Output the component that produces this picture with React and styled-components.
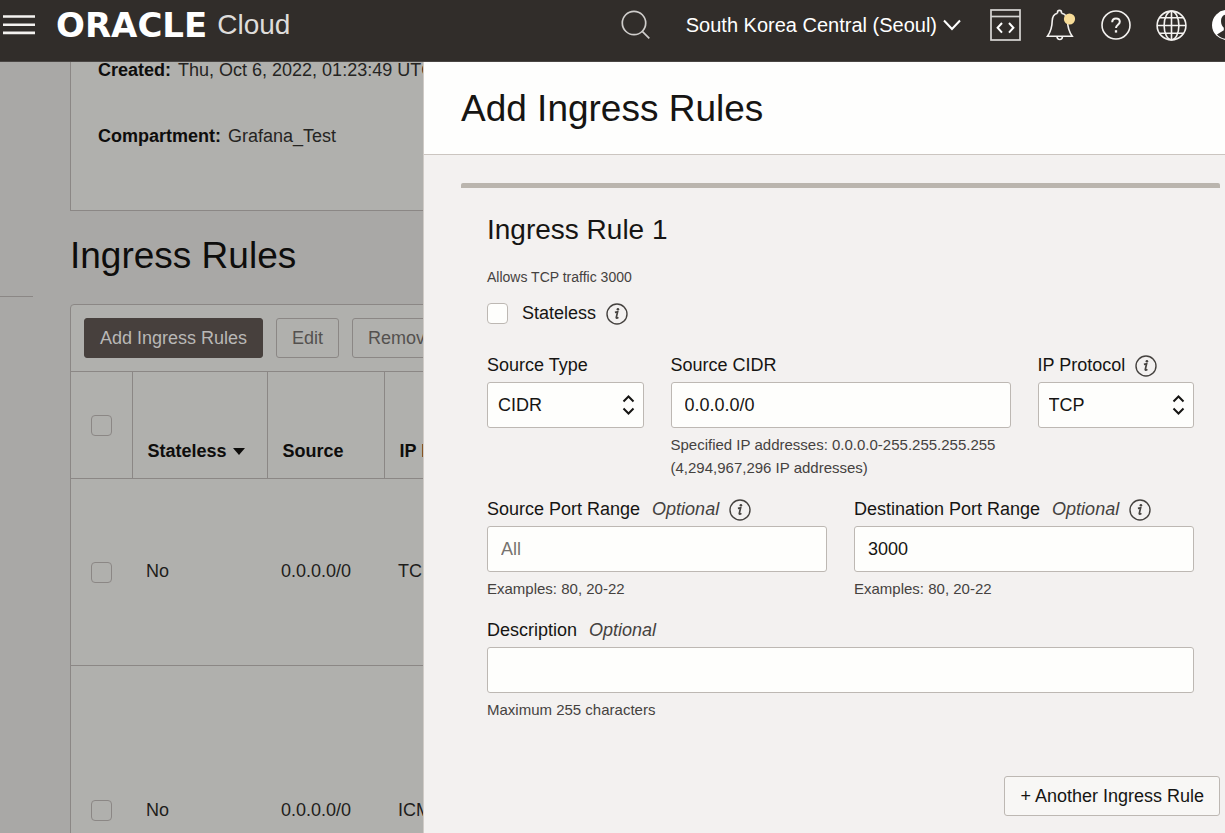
import React from "react";
import styled, { createGlobalStyle } from "styled-components";

const GlobalStyle = createGlobalStyle`
  *, *::before, *::after { box-sizing: border-box; }
  body {
    margin: 0;
    overflow: hidden;
    font-family: "Liberation Sans", Arial, sans-serif;
    font-size: 18px;
    line-height: 24px;
    color: #161513;
  }
  h1, h2, h3, p { margin: 0; font-weight: 400; }
  button, input, select { font: inherit; color: inherit; margin: 0; }
`;

const Shell = styled.div`
  display: flex;
  flex-direction: column;
  height: 100vh;
`;

/* ---------- top bar ---------- */

const TopBar = styled.header`
  display: flex;
  align-items: center;
  flex: none;
  height: 62px;
  padding: 0 0 11px 3px;
  background: #312d2a;
  border-bottom: 1px solid #4a4644;
  color: #fff;
`;

const BarButton = styled.button`
  display: flex;
  align-items: center;
  flex: none;
  padding: 0;
  border: 0;
  background: none;
  color: #f4f2f0;
  cursor: pointer;
  svg { display: block; flex: none; }
`;

const Brand = styled.a`
  display: flex;
  align-items: center;
  gap: 10px;
  margin-left: 21px;
  color: #fff;
  text-decoration: none;
`;

const BrandName = styled.span`
  font-family: "DejaVu Sans", sans-serif;
  font-size: 34px;
  font-weight: 700;
  line-height: 32px;
`;

const BrandProduct = styled.span`
  font-size: 28px;
  line-height: 32px;
  color: #dedcda;
`;

const BarTools = styled.div`
  display: flex;
  align-items: center;
  gap: 25px;
  margin-left: auto;
`;

const RegionButton = styled(BarButton)`
  gap: 6px;
  margin: 0 4px 0 10px;
  font-size: 20px;
  color: #fff;
  white-space: nowrap;
`;

const AvatarButton = styled(BarButton)`
  width: 13px;
  overflow: hidden;
`;

/* ---------- dimmed page ---------- */

const Workspace = styled.div`
  display: flex;
  flex: 1;
  min-height: 0;
`;

const Page = styled.main`
  display: flex;
  flex: 0 0 424px;
  overflow: hidden;
  background: #a9a8a6;
  border-right: 1px solid #cfcbc7;
`;

const Sidebar = styled.aside`
  flex: 0 0 70px;
  padding-top: 234px;
`;

const SidebarRule = styled.hr`
  width: 33px;
  margin: 0;
  border: 0;
  border-top: 1px solid #8b8785;
`;

const PageContent = styled.div`
  flex: none;
  width: 640px;
`;

const Facts = styled.dl`
  display: flex;
  flex-direction: column;
  gap: 42px;
  height: 149px;
  margin: 0;
  padding: 0 27px;
  background: #b0b0ad;
  border: 1px solid #8b8785;
  border-top: 0;
  line-height: 16px;
`;

const Fact = styled.div`
  display: flex;
  gap: 7px;
  height: 24px;
  color: #252422;
  dt { font-weight: 700; color: #0e0d0c; }
  dd { margin: 0; }
`;

const PageTitle = styled.h2`
  margin: 23px 0 26px;
  font-size: 37px;
  line-height: 44px;
  color: #0e0d0c;
`;

const TableCard = styled.section`
  background: #b0b0ad;
  border: 1px solid #8b8785;
  border-radius: 4px 4px 0 0;
`;

const Toolbar = styled.div`
  display: flex;
  gap: 13px;
  padding: 13px;
`;

const ActionButton = styled.button`
  height: 40px;
  padding: 0 15px;
  border: 1px solid ${(p) => (p.$primary ? "#47403d" : "#8b8785")};
  border-radius: 3px;
  background: ${(p) => (p.$primary ? "#47403d" : "transparent")};
  color: ${(p) => (p.$primary ? "#b9b8b6" : "#54514f")};
  white-space: nowrap;
`;

const RulesTable = styled.table`
  width: 100%;
  table-layout: fixed;
  border-collapse: collapse;
  color: #1e1d1b;
`;

const HeadCell = styled.th`
  width: ${(p) => p.$width};
  height: 107px;
  padding: 0 15px 15px;
  border: 1px solid #8b8785;
  border-left-width: ${(p) => (p.$first ? 0 : "1px")};
  text-align: left;
  vertical-align: bottom;
  white-space: nowrap;
  color: #0e0d0c;
  svg { margin-left: 6px; vertical-align: 2px; }
`;

const CheckHeadCell = styled(HeadCell)`
  padding: 0 20px;
  vertical-align: middle;
`;

const Row = styled.tr`
  height: ${(p) => (p.$tall ? "290px" : "187px")};
  border-bottom: 1px solid #8b8785;
`;

const Cell = styled.td`
  padding: 0 14px 2px;
`;

const CheckCell = styled(Cell)`
  padding: 0 20px;
`;

const CheckBox = styled.input`
  appearance: none;
  display: block;
  flex: none;
  width: 21px;
  height: 21px;
  border: 1px solid ${(p) => (p.$dim ? "#8b8785" : "#bdb8b3")};
  border-radius: 4px;
  background: ${(p) => (p.$dim ? "transparent" : "#fefefc")};
`;

/* ---------- drawer ---------- */

const Drawer = styled.section`
  display: flex;
  flex-direction: column;
  flex: 1;
  min-width: 0;
  background: #f3f1f0;
`;

const DrawerHead = styled.header`
  padding: 25px 37px 23px;
  background: #fefefd;
  border-bottom: 1px solid #cbc5c0;
`;

const DrawerTitle = styled.h1`
  font-size: 37px;
  line-height: 44px;
`;

const DrawerBody = styled.form`
  display: flex;
  flex-direction: column;
  padding: 28px 5px 18px 37px;
`;

const RuleCard = styled.fieldset`
  min-width: 0;
  margin: 0;
  padding: 24px 26px 55px;
  border: 0;
  border-top: 5px solid #bab5ae;
  border-radius: 2px 2px 0 0;
`;

const RuleTitle = styled.h3`
  font-size: 28px;
  line-height: 36px;
`;

const Summary = styled.p`
  margin-top: 18px;
  font-size: 14px;
  line-height: 23px;
  color: #45423f;
`;

const StatelessRow = styled.div`
  display: flex;
  align-items: center;
  margin: 12px 0 28px;
  label { margin-left: 14px; }
`;

const FieldGrid = styled.div`
  display: grid;
  grid-template-columns: repeat(4, 1fr);
  gap: 18px 27px;
`;

const FieldBox = styled.div`
  grid-column: span ${(p) => p.$span};
  min-width: 0;
`;

const LabelRow = styled.div`
  display: flex;
  align-items: center;
  height: 24px;
  margin-bottom: 5px;
  white-space: nowrap;
`;

const Optional = styled.em`
  margin-left: 12px;
  color: #45423f;
`;

const InfoButton = styled.button`
  display: block;
  flex: none;
  margin: 2px 0 0 10px;
  padding: 0;
  border: 0;
  background: none;
  color: #45423f;
  svg { display: block; }
`;

const Input = styled.input`
  display: block;
  width: 100%;
  height: 46px;
  padding: 0 13px;
  border: 1px solid #bdb8b3;
  border-radius: 3px;
  background: #fefefc;
  &::placeholder { color: #77736f; opacity: 1; }
`;

const SelectWrap = styled.div`
  display: grid;
  align-items: center;
  > * { grid-area: 1 / 1; }
  svg { justify-self: end; margin-right: 9px; pointer-events: none; }
`;

const Select = styled.select`
  appearance: none;
  width: 100%;
  height: 46px;
  padding: 0 30px 0 10px;
  border: 1px solid #bdb8b3;
  border-radius: 3px;
  background: #fefefc;
`;

const Help = styled.p`
  margin-top: 5px;
  font-size: 15px;
  line-height: 23px;
  color: #45423f;
`;

const AddButton = styled.button`
  align-self: flex-end;
  height: 40px;
  padding: 0 15px;
  border: 1px solid #bdb8b3;
  border-radius: 3px;
  background: #f8f7f5;
  white-space: nowrap;
`;

/* ---------- icons ---------- */

const line = { fill: "none", stroke: "currentColor", strokeWidth: 1.6 };

const MenuIcon = () => (
  <svg width="32" height="22" viewBox="0 0 32 22" {...line} strokeWidth="2.6">
    <path d="M0 2.500h32M0 10.700h32M0 18.900h32" />
  </svg>
);

const SearchIcon = () => (
  <svg width="30" height="30" viewBox="0 0 30 30" {...line} stroke="#cfcdcb" strokeWidth="1.7">
    <circle cx="13" cy="13" r="11.7" />
    <path d="M21.3 21.3l7 7" />
  </svg>
);

const ChevronIcon = () => (
  <svg width="18" height="12" viewBox="0 0 18 12" {...line} strokeWidth="2">
    <path d="M1 1.5l8 8.5 8-8.5" />
  </svg>
);

const CodeIcon = () => (
  <svg width="31" height="32" viewBox="0 0 31 32" {...line} stroke="#d8d6d4" strokeWidth="1.7">
    <rect x="1" y="1" width="29" height="30" />
    <path d="M1 7.5h29" />
    <path d="M12 14l-4.4 4.8 4.4 4.8M19 14l4.4 4.8-4.4 4.8" stroke="#fff" strokeWidth="2" />
  </svg>
);

const BellIcon = () => (
  <svg width="30" height="32" viewBox="0 0 30 32" {...line}>
    <path d="M11.5 4.2V3.4a2 2 0 0 1 4 0v.8M11.5 4.2C8 5 6.300 8 6.200 12c-.1 6.500-1.400 10.500-4.700 15.300h24.700c-3.300-4.800-4.600-8.800-4.700-15.300-.1-4-2-7-6-7.800M11 27.500a2.700 3 0 0 0 5.400 0" />
    <circle cx="23.500" cy="10" r="5.600" fill="#f7dc98" stroke="none" />
  </svg>
);

const HelpIcon = () => (
  <svg width="30" height="30" viewBox="0 0 30 30" {...line}>
    <circle cx="15" cy="15" r="14" />
    <path d="M11.200 12.300c0-2.600 1.600-3.900 3.800-3.900s3.800 1.300 3.800 3.400c0 3-3.800 2.900-3.800 6.200" strokeWidth="2" />
    <path d="M15 20.200v2.400" strokeWidth="2.300" />
  </svg>
);

const GlobeIcon = () => (
  <svg width="31" height="31" viewBox="0 0 31 31" {...line}>
    <circle cx="15.500" cy="15.500" r="14.400" />
    <ellipse cx="15.500" cy="15.500" rx="7.400" ry="14.400" />
    <path d="M15.500 1v29M1 15.500h29M3.600 7.800h23.800M3.600 23.200h23.800" />
  </svg>
);

const AvatarIcon = () => (
  <svg width="30" height="30" viewBox="0 0 30 30">
    <circle cx="15" cy="15" r="15" fill="#fff" />
    <path d="M15 4.500c-3.800 0-6 2.700-6 6.500 0 3 1.200 5.500 2.800 6.800v2.400L5 24.500C7.500 27.200 11 29 15 29s7.500-1.800 10-4.500l-6.800-4.300v-2.400C19.800 16.500 21 14 21 11c0-3.800-2.200-6.500-6-6.500z" fill="#312d2a" />
  </svg>
);

const SortIcon = () => (
  <svg width="12" height="7" viewBox="0 0 12 7">
    <path d="M0 0h12L6 7z" fill="currentColor" />
  </svg>
);

const StepperIcon = () => (
  <svg width="13" height="20" viewBox="0 0 13 20" {...line} strokeWidth="2">
    <path d="M1.500 6.500l5-5 5 5M1.500 13.500l5 5 5-5" />
  </svg>
);

const InfoIcon = () => (
  <svg width="22" height="22" viewBox="0 0 22 22" {...line} strokeWidth="1.400">
    <circle cx="11" cy="11" r="10" />
    <path d="M8.900 9.300l2.700-.5-1.300 5.600c-.2 1 .6 1.200 2.100 0" strokeWidth="1.700" />
    <circle cx="11.900" cy="6.200" r="1.300" fill="currentColor" stroke="none" />
  </svg>
);

/* ---------- parts ---------- */

function Info({ about }) {
  return (
    <InfoButton type="button" aria-label={`About ${about}`}>
      <InfoIcon />
    </InfoButton>
  );
}

function Field({ id, label, span, optional, info, help, children }) {
  return (
    <FieldBox $span={span}>
      <LabelRow>
        <label htmlFor={id}>{label}</label>
        {optional && <Optional>Optional</Optional>}
        {info && <Info about={label} />}
      </LabelRow>
      {children}
      {help && <Help>{help}</Help>}
    </FieldBox>
  );
}

function Picker({ id, options }) {
  return (
    <SelectWrap>
      <Select id={id}>
        {options.map((o) => (
          <option key={o}>{o}</option>
        ))}
      </Select>
      <StepperIcon />
    </SelectWrap>
  );
}

const rules = [
  { stateless: "No", source: "0.0.0.0/0", protocol: "TCP" },
  { stateless: "No", source: "0.0.0.0/0", protocol: "ICMP", tall: true },
];

export default function App() {
  return (
    <Shell>
      <GlobalStyle />
      <TopBar>
        <BarButton aria-label="Menu"><MenuIcon /></BarButton>
        <Brand href="#">
          <BrandName>ORACLE</BrandName>
          <BrandProduct>Cloud</BrandProduct>
        </Brand>
        <BarTools>
          <BarButton aria-label="Search"><SearchIcon /></BarButton>
          <RegionButton>
            South Korea Central (Seoul)
            <ChevronIcon />
          </RegionButton>
          <BarButton aria-label="Developer tools"><CodeIcon /></BarButton>
          <BarButton aria-label="Notifications"><BellIcon /></BarButton>
          <BarButton aria-label="Help"><HelpIcon /></BarButton>
          <BarButton aria-label="Language"><GlobeIcon /></BarButton>
          <AvatarButton aria-label="Profile"><AvatarIcon /></AvatarButton>
        </BarTools>
      </TopBar>

      <Workspace>
        <Page>
          <Sidebar><SidebarRule /></Sidebar>
          <PageContent>
            <Facts>
              <Fact><dt>Created:</dt><dd>Thu, Oct 6, 2022, 01:23:49 UTC</dd></Fact>
              <Fact><dt>Compartment:</dt><dd>Grafana_Test</dd></Fact>
            </Facts>
            <PageTitle>Ingress Rules</PageTitle>
            <TableCard>
              <Toolbar>
                <ActionButton $primary>Add Ingress Rules</ActionButton>
                <ActionButton>Edit</ActionButton>
                <ActionButton>Remove</ActionButton>
              </Toolbar>
              <RulesTable>
                <thead>
                  <tr>
                    <CheckHeadCell $first $width="61px">
                      <CheckBox $dim type="checkbox" aria-label="Select all rules" />
                    </CheckHeadCell>
                    <HeadCell $width="135px">Stateless<SortIcon /></HeadCell>
                    <HeadCell $width="117px">Source</HeadCell>
                    <HeadCell>IP Protocol</HeadCell>
                  </tr>
                </thead>
                <tbody>
                  {rules.map((r) => (
                    <Row key={r.protocol} $tall={r.tall}>
                      <CheckCell>
                        <CheckBox $dim type="checkbox" aria-label={`Select ${r.protocol} rule`} />
                      </CheckCell>
                      <Cell>{r.stateless}</Cell>
                      <Cell>{r.source}</Cell>
                      <Cell>{r.protocol}</Cell>
                    </Row>
                  ))}
                </tbody>
              </RulesTable>
            </TableCard>
          </PageContent>
        </Page>

        <Drawer>
          <DrawerHead>
            <DrawerTitle>Add Ingress Rules</DrawerTitle>
          </DrawerHead>
          <DrawerBody>
            <RuleCard>
              <RuleTitle>Ingress Rule 1</RuleTitle>
              <Summary>Allows TCP traffic 3000</Summary>
              <StatelessRow>
                <CheckBox type="checkbox" id="stateless" />
                <label htmlFor="stateless">Stateless</label>
                <Info about="Stateless" />
              </StatelessRow>
              <FieldGrid>
                <Field id="source-type" label="Source Type" span={1}>
                  <Picker id="source-type" options={["CIDR"]} />
                </Field>
                <Field
                  id="source-cidr"
                  label="Source CIDR"
                  span={2}
                  help={<>Specified IP addresses: 0.0.0.0-255.255.255.255<br />(4,294,967,296 IP addresses)</>}
                >
                  <Input id="source-cidr" defaultValue="0.0.0.0/0" />
                </Field>
                <Field id="protocol" label="IP Protocol" span={1} info>
                  <Picker id="protocol" options={["TCP"]} />
                </Field>
                <Field id="source-port" label="Source Port Range" span={2} optional info help="Examples: 80, 20-22">
                  <Input id="source-port" placeholder="All" />
                </Field>
                <Field id="dest-port" label="Destination Port Range" span={2} optional info help="Examples: 80, 20-22">
                  <Input id="dest-port" defaultValue="3000" />
                </Field>
                <Field id="description" label="Description" span={4} optional help="Maximum 255 characters">
                  <Input id="description" />
                </Field>
              </FieldGrid>
            </RuleCard>
            <AddButton type="button">+ Another Ingress Rule</AddButton>
          </DrawerBody>
        </Drawer>
      </Workspace>
    </Shell>
  );
}
